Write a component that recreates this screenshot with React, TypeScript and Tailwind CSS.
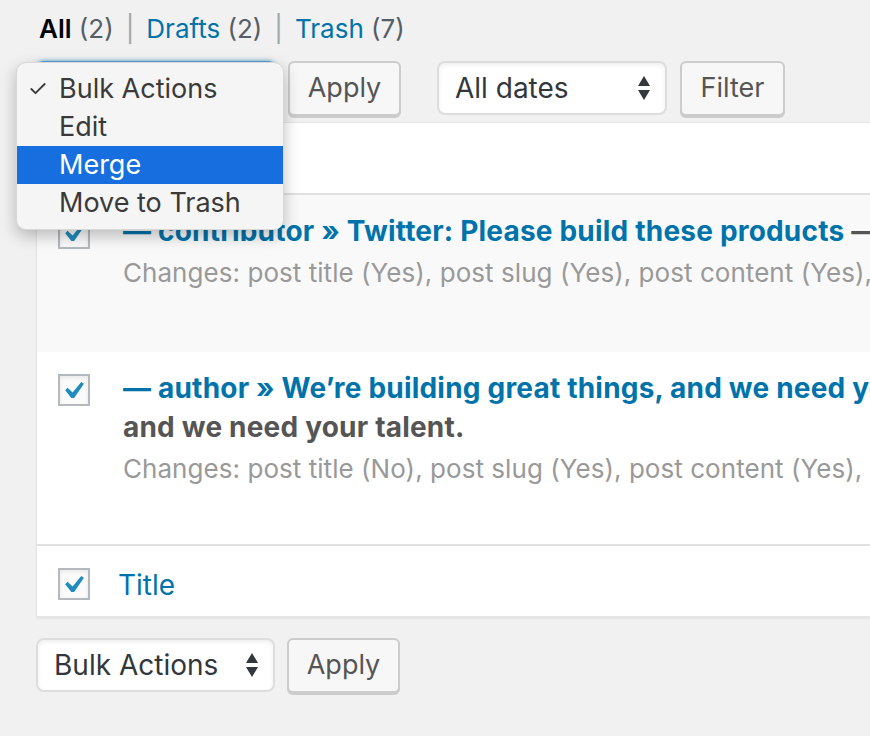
import { Check } from "lucide-react";

const SelectArrows = () => (
  <svg width="14" height="26" viewBox="0 0 14 26" className="shrink-0">
    <path d="M7 1 L13 11 H1 Z" fill="#32373c" />
    <path d="M7 25 L13 15 H1 Z" fill="#32373c" />
  </svg>
);

const Checkbox = () => (
  <div className="w-[32px] h-[32px] border-2 border-[#b4b9be] bg-[#fbfbfb] shadow-[inset_0_2px_4px_rgba(0,0,0,0.08)] flex items-center justify-center">
    <svg width="30" height="30" viewBox="0 0 20 20">
      <path d="M15.2 4.3l1.9 1.3-7 10.1H8.1L3.7 10.1l1.7-1.7 3.6 3.4z" fill="#1e8cbe" />
    </svg>
  </div>
);

const Button = ({ label, width }: { label: string; width: string }) => (
  <button
    className={`${width} h-[55px] rounded-[6px] border-2 border-[#cccccc] bg-[#f7f7f7] shadow-[0_2px_0_#cccccc] text-[27px] text-[#555555] flex items-center justify-center`}
  >
    {label}
  </button>
);

const Select = ({ label, width, focused }: { label?: string; width: string; focused?: boolean }) => (
  <div
    className={`${width} h-[54px] rounded-[8px] border-2 bg-white flex items-center justify-between pl-[16px] pr-[14px] text-[28px] text-[#32373c] ${
      focused
        ? "border-[#5b9dd9] shadow-[0_0_4px_rgba(30,140,190,0.8)]"
        : "border-[#dddddd] shadow-[inset_0_2px_4px_rgba(0,0,0,0.07)]"
    }`}
  >
    <span>{label}</span>
    <SelectArrows />
  </div>
);

const menuItems = ["Bulk Actions", "Edit", "Merge", "Move to Trash"];

export default function App() {
  return (
    <div className="relative w-[870px] h-[736px] overflow-hidden bg-[#f1f1f1] font-['Inter',sans-serif] pl-[36px]">
      {/* status filters */}
      <div className="pt-[12px] ml-[3px] leading-[34px] text-[26px] text-[#555d66] whitespace-nowrap">
        <span className="font-semibold text-black">All</span> (2)
        <span className="text-[#a0a5aa] mx-[12px]">|</span>
        <span className="text-[#0073aa]">Drafts</span> (2)
        <span className="text-[#a0a5aa] mx-[12px]">|</span>
        <span className="text-[#0073aa]">Trash</span> (7)
      </div>

      {/* top controls, bulk select sits under the open menu */}
      <div className="mt-[15px] h-[56px] flex items-start">
        <Select width="w-[240px]" focused />
        <div className="ml-[12px]">
          <Button label="Apply" width="w-[113px]" />
        </div>
        <div className="ml-[36px]">
          <Select label="All dates" width="w-[230px]" />
        </div>
        <div className="ml-[13px]">
          <Button label="Filter" width="w-[105px]" />
        </div>
      </div>

      {/* list table */}
      <div className="mt-[5px] w-[1000px] bg-white border border-[#e5e5e5] shadow-[0_2px_2px_rgba(0,0,0,0.05)]">
        <div className="h-[72px] bg-white border-b-2 border-[#e1e1e1]" />

        <div className="flex bg-[#f9f9f9] h-[157px]">
          <div className="w-[86px] shrink-0 pl-[21px] pt-[22px]">
            <Checkbox />
          </div>
          <div className="pt-[17px] whitespace-nowrap">
            <div className="leading-[39px] text-[28px] font-bold tracking-[0.2px] text-[#0073aa]">
              — contributor » Twitter: Please build these products{" "}
              <span className="text-[#555555]">— Twitter</span>
            </div>
            <div className="mt-[2px] leading-[40px] text-[26px] tracking-[0.05px] text-[#999999]">
              Changes: post title (Yes), post slug (Yes), post content (Yes), post excerpt (No)
            </div>
          </div>
        </div>

        <div className="flex bg-white h-[194px] border-b-2 border-[#e1e1e1]">
          <div className="w-[86px] shrink-0 pl-[21px] pt-[22px]">
            <Checkbox />
          </div>
          <div className="pt-[17px] whitespace-nowrap">
            <div className="leading-[39px] text-[28px] font-bold tracking-[0.2px] text-[#0073aa]">
              — author » We’re building great things, and we need your talent. —
            </div>
            <div className="leading-[39px] text-[28px] font-bold tracking-[0.2px] text-[#555555]">
              and we need your talent.
            </div>
            <div className="mt-[2px] leading-[40px] text-[26px] tracking-[0.05px] text-[#999999]">
              Changes: post title (No), post slug (Yes), post content (Yes), post excerpt (No)
            </div>
          </div>
        </div>

        <div className="flex bg-white h-[70px]">
          <div className="w-[81px] shrink-0 pl-[21px] pt-[22px]">
            <Checkbox />
          </div>
          <div className="pt-[20px] leading-[39px] text-[28px] text-[#0073aa]">Title</div>
        </div>
      </div>

      {/* bottom controls */}
      <div className="mt-[21px] flex items-start">
        <Select label="Bulk Actions" width="w-[239px]" />
        <div className="ml-[12px]">
          <Button label="Apply" width="w-[113px]" />
        </div>
      </div>

      {/* open bulk actions menu */}
      <div className="absolute left-[16px] top-[62px] w-[268px] h-[168px] rounded-[10px] bg-[#f5f5f5] border border-[#d8d8d8] shadow-[0_6px_16px_rgba(0,0,0,0.25)] pt-[7px] pb-[5px] text-[27px] text-[#3a3a3a]">
        {menuItems.map((item) => (
          <div
            key={item}
            className={`h-[38px] flex items-center ${
              item === "Merge" ? "bg-[#176fdf] text-white" : ""
            }`}
          >
            <span className="w-[42px] pl-[11px] flex items-center">
              {item === "Bulk Actions" && <Check size={20} strokeWidth={2.2} color="#3a3a3a" />}
            </span>
            <span>{item}</span>
          </div>
        ))}
      </div>
    </div>
  );
}
